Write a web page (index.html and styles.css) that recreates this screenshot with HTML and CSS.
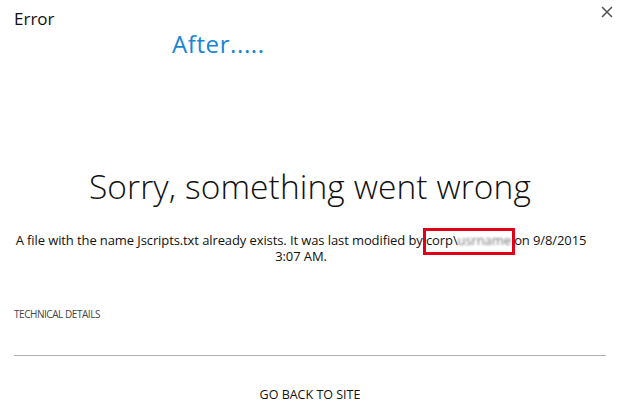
FILE: index.html
```html
<!DOCTYPE html>
<html lang="en">
<head>
  <meta charset="UTF-8">
  <title>Error</title>
  <link rel="stylesheet" href="styles.css">
</head>
<body>
  <div class="dialog">
    <div class="dialog-head">
      <div class="dialog-title">Error</div>
      <button class="close-button" title="Close">
        <svg width="12" height="12" viewBox="0 0 12 12">
          <path d="M1 1 L11 11 M11 1 L1 11" stroke="#555" stroke-width="1.6"/>
        </svg>
      </button>
    </div>
    <div class="note">After.....</div>

    <h1>Sorry, something went wrong</h1>
    <p class="message">A file with the name Jscripts.txt already exists. It was last modified by <span class="marked">corp\<span class="hidden-name">usrname</span></span> on 9/8/2015 3:07 AM.</p>

    <div class="details">TECHNICAL DETAILS</div>
    <div class="divider"></div>
    <div class="back-link">GO BACK TO SITE</div>
  </div>
</body>
</html>
```

FILE: styles.css
```css
* {
  box-sizing: border-box;
}

body {
  margin: 0;
  background: #ffffff;
  font-family: 'Open Sans', 'Noto Sans', sans-serif;
  color: #222;
}

.dialog {
  width: 620px;
  height: 409px;
  padding: 9px 14px 0 14px;
}

.dialog-head {
  display: flex;
  justify-content: space-between;
  align-items: flex-start;
}

.dialog-title {
  font-size: 17px;
  line-height: 20px;
  color: #111;
}

.close-button {
  border: none;
  background: none;
  padding: 0;
  margin-top: -3px;
  margin-right: -7px;
  width: 12px;
  height: 12px;
  cursor: pointer;
}

.close-button svg {
  display: block;
}

.note {
  margin-top: 1px;
  margin-left: 158px;
  font-size: 24px;
  line-height: 27px;
  letter-spacing: 0.6px;
  color: #1585d4;
}

h1 {
  margin: 109px 0 0;
  text-align: center;
  font-size: 33.5px;
  line-height: 40px;
  font-weight: 300;
  letter-spacing: 0.1px;
  color: #111;
}

.message {
  margin: 26px 0 0;
  padding: 0 18px 0 0;
  text-align: center;
  font-size: 13px;
  line-height: 16px;
  letter-spacing: -0.1px;
  color: #111;
}

/* red annotation box drawn over the user name */
.marked {
  position: relative;
}

.marked::after {
  content: '';
  position: absolute;
  left: -3px;
  right: -4px;
  top: -3px;
  bottom: -6px;
  border: 3px solid #e00018;
}

.hidden-name {
  color: #777;
  filter: blur(1.1px);
}

.details {
  margin-top: 43px;
  font-size: 10px;
  line-height: 14px;
  letter-spacing: -0.45px;
  color: #444;
}

.divider {
  margin-top: 34px;
  height: 1px;
  background: #b0b0b0;
}

.back-link {
  margin-top: 31px;
  text-align: center;
  font-size: 12.5px;
  line-height: 16px;
  color: #111;
}
```
